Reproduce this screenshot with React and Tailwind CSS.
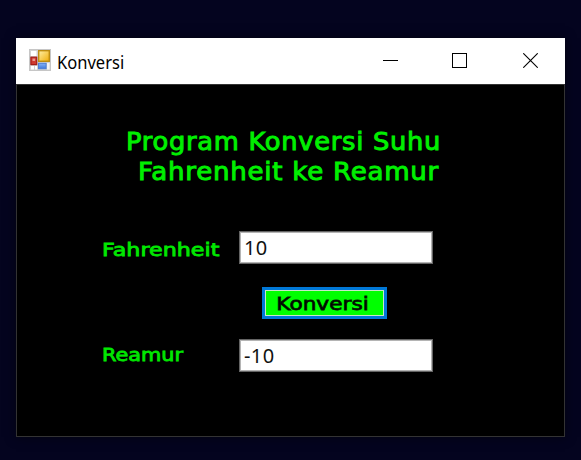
function FormIcon() {
  return (
    <svg width="22" height="22" viewBox="0 0 22 22" className="mb-[2px] ml-[13px] shrink-0">
      <defs>
        <linearGradient id="gold" x1="0" y1="0" x2="1" y2="1">
          <stop offset="0" stopColor="#fff0a8" />
          <stop offset="1" stopColor="#f0ae08" />
        </linearGradient>
        <linearGradient id="blue" x1="0" y1="0" x2="0" y2="1">
          <stop offset="0" stopColor="#86b2f8" />
          <stop offset="1" stopColor="#4079dc" />
        </linearGradient>
      </defs>
      <rect x="0.5" y="0.5" width="21" height="21" fill="#d2d2d2" stroke="#c6c6c6" />
      <rect x="2" y="2" width="5.5" height="5" fill="#fff" />
      <rect x="2" y="17" width="3" height="3.5" fill="#fff" />
      <rect x="6" y="17" width="2" height="3.5" fill="#fff" />
      <rect x="18" y="14" width="2.5" height="6.5" fill="#f4f4f4" />
      <rect x="9.7" y="1.7" width="10.6" height="10.6" fill="url(#gold)" stroke="#bd8d12" strokeWidth="1.4" />
      <rect x="1.9" y="8.2" width="5.8" height="7.4" fill="#cf3a30" stroke="#a51d18" strokeWidth="1.2" />
      <rect x="3.5" y="9.6" width="2.6" height="2.4" fill="#e99a91" />
      <rect x="9.5" y="14.3" width="7.6" height="5.4" fill="url(#blue)" stroke="#4d7fd6" />
    </svg>
  );
}

function TitleBar() {
  return (
    <header className="flex h-[46px] items-center bg-white">
      <FormIcon />
      <span className="ml-[6px] mt-px origin-left scale-x-[0.945] font-['Noto_Sans',sans-serif] text-[17.5px] leading-6 text-black">
        Konversi
      </span>
      <div className="ml-auto mr-[27px] flex items-center gap-[54px]">
        <svg width="15" height="15" shapeRendering="crispEdges" className="mb-px">
          <path d="M0 7.5H15" stroke="#000" />
        </svg>
        <svg width="15" height="15" shapeRendering="crispEdges" className="mb-px">
          <rect x="0.5" y="0.5" width="14" height="14" fill="none" stroke="#000" />
        </svg>
        <svg width="15" height="15" className="mb-px ml-[2px]">
          <path d="M0.3 0.3L14.7 14.7M14.7 0.3L0.3 14.7" stroke="#000" strokeWidth="1.1" />
        </svg>
      </div>
    </header>
  );
}

function Field({ label, value, labelClass }) {
  return (
    <div className="flex h-[33px] items-center">
      <div className="w-[137px] shrink-0">
        <span className={`inline-block origin-left whitespace-nowrap text-[18.5px] leading-6 text-[#00e800] [-webkit-text-stroke:0.8px_#00e800] ${labelClass}`}>
          {label}
        </span>
      </div>
      <input
        readOnly
        value={value}
        className="h-[33px] w-[194px] border border-solid border-[#646464] bg-white pb-[2px] pl-[4px] pt-[2px] font-['Noto_Sans',sans-serif] text-[20px] leading-6 tracking-[0.4px] text-[#111] shadow-[inset_0_0_0_1px_#b4b4b4] outline-none"
      />
    </div>
  );
}

export default function App() {
  return (
    <div className="h-[460px] w-[581px] overflow-hidden bg-[#04041f] pl-[16px] pt-[38px]">
      <section className="h-[399px] w-[549px] bg-black shadow-[0_0_10px_#00000080]">
        <TitleBar />
        <main className="h-[353px] border border-[#333] pl-[85px] pt-[42px] font-['DejaVu_Sans',Verdana,sans-serif]">
          <h1 className="whitespace-pre text-[24px] leading-[30px] tracking-[0.7px] text-[#00f000] [-webkit-text-stroke:0.9px_#00f000]">
            <span className="ml-[24px] block w-max origin-left scale-x-[1.07]">Program Konversi Suhu</span>
            <span className="ml-[36px] block w-max origin-left scale-x-[1.085]">Fahrenheit ke Reamur</span>
          </h1>
          <div className="mt-[44px]">
            <Field label="Fahrenheit" value="10" labelClass="scale-x-[1.2] mt-[6px]" />
          </div>
          <button className="ml-[160px] mt-[23px] flex h-[32px] w-[125px] items-center justify-center border-[3px] border-[#0078d7] bg-[#00ff00] text-[18.5px] leading-6 text-black shadow-[inset_0_0_0_1px_#c8e8c8] [-webkit-text-stroke:0.8px_#001800]">
            <span className="mr-[4px] scale-x-[1.17] pt-[2px]">Konversi</span>
          </button>
          <div className="mt-[20px]">
            <Field label="Reamur" value="-10" labelClass="scale-x-[1.125]" />
          </div>
        </main>
      </section>
    </div>
  );
}
